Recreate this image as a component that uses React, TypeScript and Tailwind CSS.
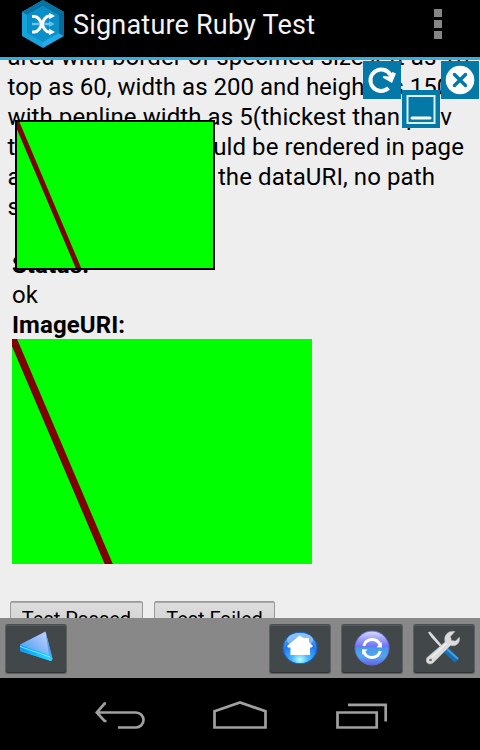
import type { ReactNode } from "react";

function HexLogo() {
  return (
    <svg className="block h-12 w-11" viewBox="0 0 44 48">
      <polygon points="22,0 43,12 22,24 1,12" fill="#086f9f" />
      <polygon points="1,12 22,0 22,48 1,36" fill="#16a3dc" />
      <polygon points="22,0 43,12 43,36 22,24" fill="#08699a" />
      <polygon points="43,36 22,48 22,24" fill="#21ace5" />
      <polygon points="22,0 43,12 38,15 22,6 6,15 1,12" fill="#0873a3" />
      <polygon points="22,6 38,15 38,33 22,42 6,33 6,15" fill="#0b8fc8" />
      <path d="M11 24H30" stroke="#69c5ea" strokeWidth="2.4" />
      <path d="M28 21l5.500 3-5.500 3z" fill="#69c5ea" />
      <path d="M11 16.500h2.500C21 16.500 21 32 28 32h2M11 32h2.500C21 32 21 16 28 16h2" fill="none" stroke="#fff" strokeWidth="3" />
      <path d="M28 12.800l6 3.200-6 3.200zM28 28.800l6 3.200-6 3.200z" fill="#fff" />
    </svg>
  );
}

function ToolButton({ children }: { children: ReactNode }) {
  return (
    <button className="flex h-[50px] w-[62px] items-center justify-center rounded-[3px] border border-[#5b5f61] border-t-[#4b5052] bg-[#42474a] shadow-[inset_0_1px_#54595b,inset_0_-1px_#2e3335]">
      {children}
    </button>
  );
}

function Line({ start, end, endClass = "" }: { start: string; end: string; endClass?: string }) {
  return (
    <div className="flex h-[30px] justify-between whitespace-pre">
      <span>{start}</span>
      <span className={endClass}>{end}</span>
    </div>
  );
}

export default function App() {
  return (
    <div className="relative h-[750px] w-[480px] overflow-hidden bg-[#eee] font-[Roboto,sans-serif] text-black">
      <header className="flex h-[60px] border-b-[3px] border-[#33b0e3] bg-black pl-[21px]">
        <HexLogo />
        <h1 className="ml-2 w-[350px] whitespace-nowrap text-[27px] leading-[50px] tracking-[0.2px] text-[#f3f3f3]">Signature Ruby Test</h1>
        <div className="ml-[11px] flex flex-col gap-[3px] pt-[9px]">
          <i className="size-2 bg-[#858585]" />
          <i className="size-2 bg-[#858585]" />
          <i className="size-2 bg-[#858585]" />
        </div>
      </header>

      <main className="h-[558px] overflow-hidden">
        <div className="-mt-[18px] ml-[7.5px] w-[456.5px] text-[24px] leading-[30px] tracking-[0.09px]">
          <div className="h-[30px] whitespace-nowrap">area with border of specified size left as 10,</div>
          <div className="h-[30px] whitespace-nowrap tracking-[0.02px]">top as 60, width as 200 and height as 150</div>
          <div className="h-[30px] whitespace-nowrap">with penline width as 5(thickest than prev</div>
          <Line start="test) Image" end="should be rendered in page" />
          <Line start="along with" end="the dataURI, no path" endClass="mr-[29px]" />
          <div className="h-[30px]">shown</div>
        </div>
        <div className="ml-3 mt-[28px] text-[24px] leading-[30px] tracking-[0.09px]">
          <div className="h-[30px] font-bold">Status:</div>
          <div className="h-[30px]">ok</div>
          <div className="h-[30px] font-bold">ImageURI:</div>
          <svg className="mt-[-1px] block h-[225px] w-[300px] bg-[#0f0]" viewBox="0 0 300 225">
            <path d="M-2-7L101 235" stroke="#800000" strokeWidth="7.5" />
          </svg>
        </div>
        <div className="ml-[10px] mt-[37px] flex gap-[11px] text-[20px] leading-[30px]">
          <button className="h-[38px] w-[133px] rounded-[2px] border border-[#999] bg-linear-to-b from-[#ddd] to-[#cecece] pb-[3px] shadow-[inset_0_1px_#aaa]">Test Passed</button>
          <button className="h-[38px] w-[121px] rounded-[2px] border border-[#999] bg-linear-to-b from-[#ddd] to-[#cecece] pb-[3px] shadow-[inset_0_1px_#aaa]">Test Failed</button>
        </div>
      </main>

      <footer className="flex h-[60px] items-center bg-[#888] px-[5px] pt-[2px]">
        <ToolButton>
          <svg className="mt-[-6px] h-10 w-10" viewBox="0 0 40 40">
            <defs>
              <linearGradient id="backFace" x1="1" y1="0" x2="0" y2="1"><stop stopColor="#d4d8ff" /><stop offset=".5" stopColor="#7fb4f7" /><stop offset="1" stopColor="#1a96f4" /></linearGradient>
              <linearGradient id="backEdge"><stop stopColor="#0a98f8" /><stop offset="1" stopColor="#22e0ff" /></linearGradient>
            </defs>
            <path d="M4 18.500L29.500 5.500 36.500 33 35 35 4 25z" fill="url(#backFace)" />
            <path d="M4 19L34 29 36.500 33 35 35 4 25z" fill="url(#backEdge)" />
            <path d="M29.500 5.500L36.500 33 33 29z" fill="#4ca3f0" />
            <path d="M4 20.500L34 31" stroke="#7de4ff" />
          </svg>
        </ToolButton>
        <div className="ml-auto flex gap-[10px]">
          <ToolButton>
            <svg className="mt-[-3px] size-9" viewBox="0 0 36 36">
              <defs><radialGradient id="homeBall" cx=".5" cy=".87" r=".8"><stop stopColor="#b9ffff" /><stop offset=".3" stopColor="#48b7fb" /><stop offset=".7" stopColor="#2277ed" /><stop offset="1" stopColor="#5aa5fa" /></radialGradient></defs>
              <ellipse cx="18" cy="18" rx="17" ry="15.700" fill="url(#homeBall)" stroke="#1667cf" strokeWidth="1" />
              <ellipse cx="18" cy="10" rx="13" ry="7" fill="#b8dcff" opacity=".55" />
              <path d="M17.500 5.500l5 3V8h4.500v4l4 4-1.500 1.500h-1.500V25H8.500v-7.500H6L5 16z" fill="#fff" />
            </svg>
          </ToolButton>
          <ToolButton>
            <svg className="mt-[-2px] size-9" viewBox="0 0 36 36">
              <defs><linearGradient id="syncBall" x1="0" y1="0" x2="0" y2="1"><stop stopColor="#dcdcff" /><stop offset=".22" stopColor="#a3a3f8" /><stop offset=".46" stopColor="#6f72f4" /><stop offset=".5" stopColor="#439ce8" /><stop offset=".75" stopColor="#55a4ee" /><stop offset="1" stopColor="#6564e6" /></linearGradient></defs>
              <circle cx="18" cy="18" r="17" fill="url(#syncBall)" stroke="#666bdc" strokeWidth="1" />
              <path d="M9.800 16A8.500 8.500 0 0 1 26 15M26.200 21A8.500 8.500 0 0 1 10 22" fill="none" stroke="#fff" strokeWidth="3" />
              <path d="M22.500 17.200l5.500.300-.300-5.500zM13.500 19.500l-5.500-.300.300 5.500z" fill="#fff" />
            </svg>
          </ToolButton>
          <ToolButton>
            <svg className="mt-[-2px] size-9" viewBox="0 0 36 36">
              <path d="M2 2.500L4 1.500 8 6l11 13-1.500 1.500L5.500 7.500z" fill="#d7dde0" />
              <path d="M20 20l11 10.500" stroke="#176fb5" strokeWidth="6" />
              <path d="M21 19l11 10" stroke="#489edb" strokeWidth="2" />
              <path d="M29 1.500l-4.500 5 1 4 4 .5 4-4c1 6-3.500 10-9 8.500L7 33c-4 3-9-1-6-5.500L19 12C17 5 23 0 29 1.500z" fill="#dcdcdc" stroke="#aaa" strokeWidth=".5" />
              <path d="M6 27L21 13" stroke="#f0f0f0" strokeWidth="1.500" />
              <circle cx="4.500" cy="30" r="1.300" fill="#62676a" />
            </svg>
          </ToolButton>
        </div>
      </footer>

      <nav className="h-[72px] bg-black">
        <svg className="block h-full w-full" viewBox="0 0 480 72" fill="none" stroke="#a0a0a0" strokeWidth="2.7">
          <path d="M106 25.500h-1.500L96.800 34.500l7.700 8.500h2M97 34.500h39a7.500 7.500 0 0 1 0 15h-18" />
          <path d="M214.500 33.200L240 24.500l25.500 8.700v16.300h-51z" />
          <path d="M337.500 34.500h39.200v15h-39.200zM348 26.800h37.700v16.700" />
        </svg>
      </nav>

      <svg className="absolute left-[15px] top-[120px] h-[150px] w-[200px] border-2 border-black bg-[#0f0]" viewBox="0 0 196 146">
        <path d="M-2-4L64 152" stroke="#800000" strokeWidth="5" />
      </svg>

      <svg className="absolute left-[363px] top-[61px] h-[38px] w-[38px] bg-[#0479a7]" viewBox="0 0 38 38" fill="none">
        <path d="M25.500 27A10.700 10.700 0 1 1 27.500 14" stroke="#fff" strokeWidth="4" />
        <path d="M19.500 16.500l1-1.500 5 .5 4-4.500 3.500 1.500-4 9.500z" fill="#fff" />
      </svg>
      <svg className="absolute left-[402px] top-[90px] h-[38px] w-[38px] bg-[#0479a7]" viewBox="0 0 38 38" fill="none">
        <path d="M5.500 6h27v27h-27z" stroke="#d9f1fa" strokeWidth="2" />
        <path d="M10 28h18" stroke="#fff" strokeWidth="3" strokeLinecap="round" />
      </svg>
      <svg className="absolute left-[441px] top-[61px] h-[38px] w-[38px] bg-[#0479a7]" viewBox="0 0 38 38">
        <circle cx="19" cy="19" r="14.300" fill="#fff" />
        <path d="M13.500 13.500l11 11m0-11l-11 11" stroke="#0479a7" strokeWidth="3.500" strokeLinecap="round" />
      </svg>
    </div>
  );
}
